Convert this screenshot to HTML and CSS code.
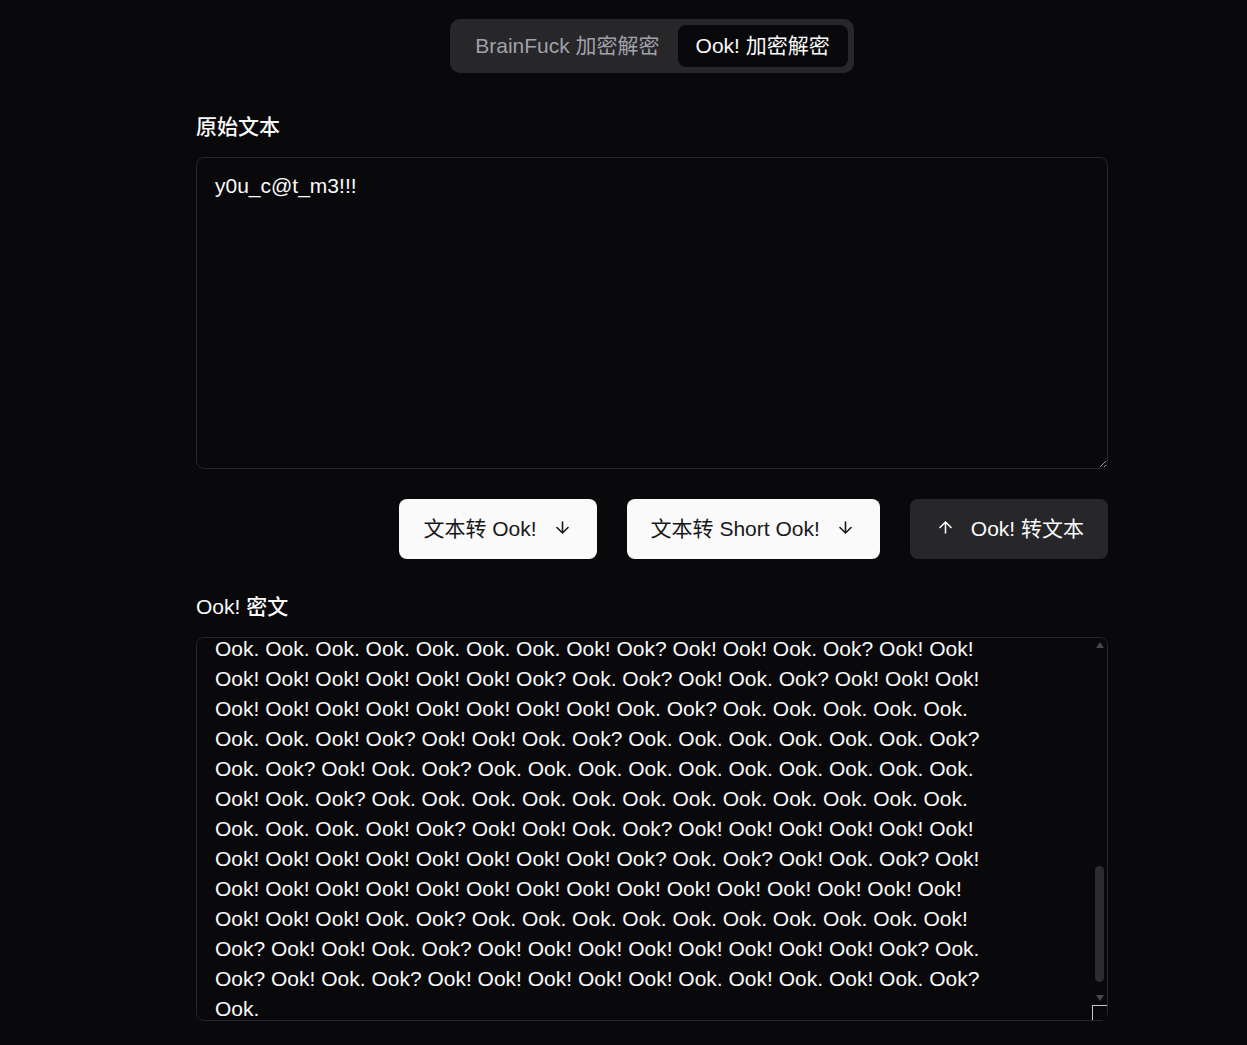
FILE: index.html
```html
<!DOCTYPE html>
<html lang="zh-CN">
<head>
<meta charset="utf-8">
<title>Ook! 加密解密</title>
<link rel="stylesheet" href="styles.css">
</head>
<body>
<main class="page">
  <div class="content">
    <div class="tabs-row">
      <div class="tabs">
        <button class="tab">BrainFuck 加密解密</button>
        <button class="tab active">Ook! 加密解密</button>
      </div>
    </div>

    <label class="label" for="plain">原始文本</label>
    <textarea id="plain" class="box box-plain" spellcheck="false">y0u_c@t_m3!!!</textarea>

    <div class="actions">
      <button class="btn btn-light">文本转 Ook!
        <svg class="ico" viewBox="0 0 24 24"><path d="M12 5v14M19 12l-7 7-7-7"/></svg>
      </button>
      <button class="btn btn-light">文本转 Short Ook!
        <svg class="ico" viewBox="0 0 24 24"><path d="M12 5v14M19 12l-7 7-7-7"/></svg>
      </button>
      <button class="btn btn-dark">
        <svg class="ico" viewBox="0 0 24 24"><path d="M12 19V5M5 12l7-7 7 7"/></svg>
        Ook! 转文本
      </button>
    </div>

    <label class="label" for="ook">Ook! 密文</label>
    <div class="ook-wrap">
    <textarea id="ook" class="box box-ook" spellcheck="false">Ook. Ook. Ook. Ook. Ook. Ook. Ook. Ook. Ook. Ook. Ook. Ook. Ook. Ook. Ook.
Ook. Ook. Ook. Ook. Ook. Ook. Ook. Ook. Ook. Ook. Ook. Ook. Ook. Ook. Ook.
Ook. Ook. Ook. Ook. Ook! Ook? Ook! Ook! Ook. Ook? Ook. Ook. Ook. Ook. Ook.
Ook. Ook. Ook. Ook. Ook. Ook. Ook. Ook. Ook. Ook. Ook. Ook. Ook. Ook. Ook.
Ook. Ook. Ook. Ook. Ook. Ook. Ook. Ook. Ook. Ook. Ook. Ook. Ook. Ook. Ook.
Ook. Ook. Ook. Ook. Ook. Ook. Ook. Ook. Ook. Ook. Ook. Ook. Ook. Ook. Ook.
Ook. Ook. Ook. Ook. Ook. Ook. Ook. Ook. Ook. Ook. Ook. Ook. Ook. Ook. Ook.
Ook. Ook. Ook. Ook. Ook. Ook. Ook. Ook. Ook? Ook! Ook! Ook? Ook! Ook? Ook.
Ook! Ook. Ook. Ook? Ook! Ook. Ook. Ook. Ook. Ook. Ook. Ook. Ook. Ook. Ook.
Ook. Ook. Ook. Ook. Ook. Ook. Ook. Ook. Ook. Ook. Ook. Ook. Ook. Ook! Ook?
Ook! Ook! Ook. Ook? Ook. Ook. Ook. Ook. Ook. Ook. Ook. Ook. Ook. Ook. Ook.
Ook. Ook. Ook. Ook. Ook. Ook. Ook. Ook. Ook. Ook. Ook. Ook. Ook. Ook. Ook.
Ook. Ook. Ook. Ook. Ook. Ook. Ook. Ook. Ook. Ook. Ook. Ook. Ook. Ook? Ook!
Ook! Ook? Ook! Ook? Ook. Ook! Ook. Ook. Ook? Ook! Ook! Ook! Ook! Ook! Ook!
Ook! Ook! Ook! Ook! Ook! Ook! Ook! Ook! Ook! Ook! Ook! Ook! Ook! Ook! Ook!
Ook! Ook! Ook! Ook! Ook! Ook! Ook! Ook! Ook! Ook! Ook! Ook! Ook! Ook! Ook!
Ook! Ook! Ook. Ook. Ook. Ook. Ook. Ook. Ook. Ook. Ook. Ook. Ook. Ook. Ook.
Ook. Ook. Ook. Ook. Ook. Ook. Ook. Ook. Ook. Ook. Ook. Ook. Ook. Ook. Ook.
Ook. Ook. Ook. Ook. Ook. Ook. Ook. Ook. Ook. Ook! Ook? Ook! Ook! Ook. Ook?
Ook! Ook! Ook! Ook! Ook! Ook! Ook! Ook! Ook! Ook! Ook! Ook! Ook! Ook! Ook!
Ook! Ook? Ook. Ook? Ook! Ook. Ook? Ook! Ook! Ook! Ook! Ook! Ook! Ook! Ook!
Ook! Ook! Ook! Ook! Ook! Ook! Ook! Ook! Ook! Ook. Ook. Ook. Ook. Ook. Ook.
Ook. Ook. Ook. Ook. Ook. Ook. Ook. Ook. Ook. Ook. Ook. Ook. Ook. Ook. Ook.
Ook. Ook. Ook. Ook. Ook! Ook? Ook! Ook! Ook. Ook? Ook. Ook. Ook. Ook. Ook.
Ook. Ook. Ook. Ook. Ook. Ook. Ook. Ook! Ook? Ook! Ook! Ook. Ook? Ook! Ook!
Ook! Ook! Ook! Ook! Ook! Ook! Ook? Ook. Ook? Ook! Ook. Ook? Ook! Ook! Ook!
Ook! Ook! Ook! Ook! Ook! Ook! Ook! Ook! Ook. Ook? Ook. Ook. Ook. Ook. Ook.
Ook. Ook. Ook! Ook? Ook! Ook! Ook. Ook? Ook. Ook. Ook. Ook. Ook. Ook. Ook?
Ook. Ook? Ook! Ook. Ook? Ook. Ook. Ook. Ook. Ook. Ook. Ook. Ook. Ook. Ook.
Ook! Ook. Ook? Ook. Ook. Ook. Ook. Ook. Ook. Ook. Ook. Ook. Ook. Ook. Ook.
Ook. Ook. Ook. Ook! Ook? Ook! Ook! Ook. Ook? Ook! Ook! Ook! Ook! Ook! Ook!
Ook! Ook! Ook! Ook! Ook! Ook! Ook! Ook! Ook? Ook. Ook? Ook! Ook. Ook? Ook!
Ook! Ook! Ook! Ook! Ook! Ook! Ook! Ook! Ook! Ook! Ook! Ook! Ook! Ook! Ook!
Ook! Ook! Ook! Ook. Ook? Ook. Ook. Ook. Ook. Ook. Ook. Ook. Ook. Ook. Ook!
Ook? Ook! Ook! Ook. Ook? Ook! Ook! Ook! Ook! Ook! Ook! Ook! Ook! Ook? Ook.
Ook? Ook! Ook. Ook? Ook! Ook! Ook! Ook! Ook! Ook. Ook! Ook. Ook! Ook. Ook?
Ook.</textarea>
      <div class="sb" aria-hidden="true">
        <span class="sb-arrow sb-up"></span>
        <span class="sb-track"><span class="sb-thumb"></span></span>
        <span class="sb-arrow sb-down"></span>
      </div>
    </div>
  </div>
</main>
<script src="script.js"></script>
</body>
</html>
```

FILE: styles.css
```css
* { box-sizing: border-box; }

html, body {
  margin: 0;
  padding: 0;
  background: #09090b;
  color: #fafafa;
  color-scheme: dark;
  font-family: "Liberation Sans", Arial, "Noto Sans CJK SC", sans-serif;
}

.page {
  padding: 19px 0 0 57px;
}

.content {
  width: 912px;
  margin: 0 auto;
  display: flex;
  flex-direction: column;
}

.tabs-row {
  display: flex;
  justify-content: center;
  margin-bottom: 39px;
}

.tabs {
  display: flex;
  background: #27272a;
  border-radius: 10px;
  padding: 6px;
}

.tab {
  font: inherit;
  font-size: 21px;
  line-height: 42px;
  height: 42px;
  border: none;
  background: transparent;
  color: #a1a1aa;
  padding: 0 18px 0 19px;
  border-radius: 8px;
  cursor: pointer;
}

.tab.active {
  background: #09090b;
  color: #fafafa;
  padding: 0 18px;
}

.label {
  font-size: 21px;
  line-height: 30px;
  font-weight: 500;
  margin-bottom: 15px;
  color: #fafafa;
}

.box {
  display: block;
  width: 100%;
  background: #09090b;
  color: #fafafa;
  border: 1px solid #27272a;
  border-radius: 8px;
  font-family: "Liberation Sans", Arial, "Noto Sans CJK SC", sans-serif;
  font-size: 21px;
  line-height: 30px;
  padding: 13px 18px;
  outline: none;
  white-space: pre-wrap;
  color-scheme: dark;
}

.box-plain {
  height: 312px;
}

.ook-wrap {
  position: relative;
}

.box-ook {
  height: 384px;
}

.box-ook::-webkit-scrollbar {
  width: 15px;
}

.box-ook::-webkit-scrollbar-corner {
  background: #09090b;
}

.box-ook::-webkit-resizer {
  background: #09090b;
  border-top: 1px solid #c8c8c8;
  border-left: 1px solid #c8c8c8;
}

/* decorative scrollbar drawn over the textarea's right edge */
.sb {
  position: absolute;
  top: 1px;
  right: 1px;
  width: 15px;
  height: 367px;
  display: flex;
  flex-direction: column;
  align-items: center;
  pointer-events: none;
}

.sb-arrow {
  flex: none;
  height: 14px;
  width: 15px;
  display: flex;
  justify-content: center;
  align-items: center;
}

.sb-up::before,
.sb-down::before {
  content: "";
  width: 0;
  height: 0;
  border-left: 4.5px solid transparent;
  border-right: 4.5px solid transparent;
}

.sb-up::before {
  border-bottom: 6px solid #48484c;
}

.sb-down::before {
  border-top: 6px solid #48484c;
}

.sb-track {
  flex: 1;
  width: 15px;
  display: flex;
  justify-content: center;
  padding-top: 214px;
}

.sb-thumb {
  width: 9px;
  height: 116px;
  border-radius: 5px;
  background: #2c2c2f;
}

.actions {
  display: flex;
  justify-content: flex-end;
  gap: 30px;
  margin: 30px 0 33px;
}

.btn {
  font: inherit;
  font-size: 21px;
  height: 60px;
  border: none;
  border-radius: 8px;
  display: flex;
  align-items: center;
  gap: 16px;
  padding: 0 25px 4px 24px;
  cursor: pointer;
}

.btn-light {
  background: #fafafa;
  color: #18181b;
}

.btn-dark {
  background: #27272a;
  color: #fafafa;
  padding: 0 24px 4px 26px;
}

.ico {
  width: 19px;
  height: 19px;
  fill: none;
  stroke: currentColor;
  stroke-width: 2;
  stroke-linecap: round;
  stroke-linejoin: round;
  flex: none;
}
```

FILE: script.js
```js
var t = document.getElementById('ook');
t.scrollTop = t.scrollHeight - t.clientHeight - 17;
```
